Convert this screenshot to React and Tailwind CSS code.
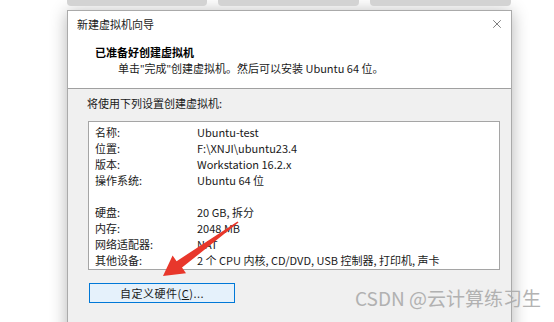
import { X } from 'lucide-react'

const general = [
  ['名称:', 'Ubuntu-test'],
  ['位置:', 'F:\\XNJI\\ubuntu23.4'],
  ['版本:', 'Workstation 16.2.x'],
  ['操作系统:', 'Ubuntu 64 位'],
  ['', ''],
  ['硬盘:', '20 GB, 拆分'],
  ['内存:', '2048 MB'],
  ['网络适配器:', 'NAT'],
  ['其他设备:', '2 个 CPU 内核, CD/DVD, USB 控制器, 打印机, 声卡'],
]

export default function App() {
  return (
    <div className="relative w-[554px] h-[322px] overflow-hidden bg-white text-[11px] text-black font-['Noto_Sans_CJK_SC','Noto_Sans',sans-serif]">
      {/* tabs behind the dialog */}
      <div className="flex gap-[11px] pl-[67px]">
        <div className="w-[140px] h-[6px] bg-[#d3d3d3] rounded-b-[4px]" />
        <div className="w-[141px] h-[6px] bg-[#d3d3d3] rounded-b-[4px]" />
        <div className="w-[141px] h-[6px] bg-[#d3d3d3] rounded-b-[4px]" />
      </div>

      {/* dialog */}
      <div className="ml-[67px] mt-[4px] w-[445px] h-[330px] border border-[#aaaaaa] bg-[#f0f0f0] shadow-[0_2px_16px_rgba(0,0,0,0.3)]">
        <div className="h-[78px] bg-white border-b border-[#a0a0a0]">
          <div className="h-[26px] flex items-center justify-between pl-[9px] pr-[7px]">
            <span className="leading-[16px] text-[#1a1a1a]">新建虚拟机向导</span>
            <X size={14} strokeWidth={1} className="text-[#222]" />
          </div>
          <div className="mt-[7px] pl-[27px] leading-[16px] font-bold">已准备好创建虚拟机</div>
          <div className="pl-[50px] leading-[16px] text-[#1a1a1a]">
            单击<span className="font-['Noto_Sans']">"</span>完成<span className="font-['Noto_Sans']">"</span>创建虚拟机。然后可以安装 Ubuntu 64 位。
          </div>
        </div>

        <div className="pl-[19px] pr-[11px] pt-[6px]">
          <p className="leading-[16px] text-[#1a1a1a]">将使用下列设置创建虚拟机:</p>

          <div className="mt-[10px] ml-[1px] w-[412px] h-[149px] bg-white border border-[#a5a5a5] pl-[6px] pt-[2px]">
            {general.map(([k, v], i) => (
              <div key={i} className="grid grid-cols-[102px_1fr] h-[16px] leading-[16px] text-[#1a1a1a]">
                <span>{k}</span>
                <span>{v}</span>
              </div>
            ))}
          </div>

          <button className="mt-[13px] ml-[2px] w-[146px] h-[20px] flex items-center justify-center bg-[#e5f1fb] border border-[#0078d7] leading-[16px] tracking-[0.5px] text-[#1a1a1a]">
            自定义硬件(<span className="underline">C</span>)...
          </button>
        </div>
      </div>

      {/* red annotation arrow */}
      <svg className="absolute left-0 top-0 pointer-events-none" width="554" height="322">
        <polygon
          points="238.5,222.6 182,267.6 186,273.2 163,276 172.6,255.6 176.6,261.2 237.5,221.4"
          fill="#e8372b"
        />
      </svg>

      {/* watermark */}
      <div className="absolute left-[355px] top-[287px] text-[19px] leading-[22px] text-[#ababab] opacity-90 whitespace-nowrap">
        CSDN @云计算练习生
      </div>
    </div>
  )
}
